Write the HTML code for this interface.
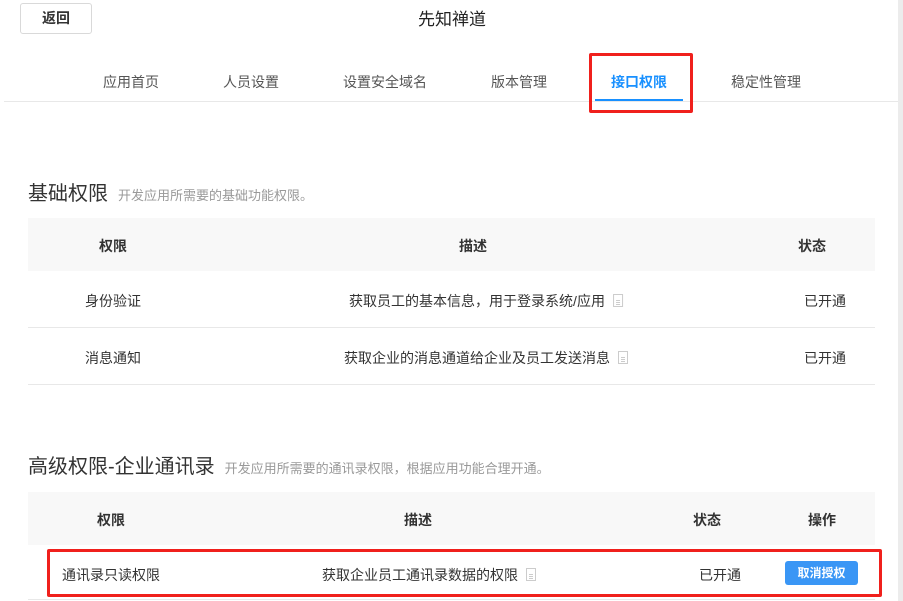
<!DOCTYPE html>
<html><head><meta charset="utf-8"><style>
*{margin:0;padding:0;box-sizing:border-box}
body{width:903px;height:601px;overflow:hidden;background:#fff;font-family:"Liberation Sans","Noto Sans CJK SC",sans-serif;color:#333;position:relative}
.a{position:absolute;white-space:nowrap}
.c{transform:translateX(-50%)}
.t14{font-size:14px}
.sub{font-size:13px;color:#999;margin-left:4px}
.doc{display:inline-block;width:10px;height:13px;border:1px solid #ccc;vertical-align:-1px;margin-left:8px;position:relative;background:#fff}
.doc:before{content:"";position:absolute;left:2px;right:2px;top:5px;height:1px;background:#ccc;box-shadow:0 2px 0 #ccc,0 4px 0 #ccc}
</style></head><body>
<div class="a" style="left:898px;top:0;width:5px;height:601px;background:#ececec"></div>
<div class="a" style="left:20px;top:3px;width:72px;height:31px;border:1px solid #d9d9d9;border-radius:3px;font-size:14px;font-weight:bold;text-align:center;line-height:29px">返回</div>
<div class="a c" style="left:452px;top:5px;font-size:17px;color:#222">先知禅道</div>
<div class="a c t14" style="left:131px;top:72px;color:#555">应用首页</div>
<div class="a c t14" style="left:251px;top:72px;color:#555">人员设置</div>
<div class="a c t14" style="left:385px;top:72px;color:#555">设置安全域名</div>
<div class="a c t14" style="left:519px;top:72px;color:#555">版本管理</div>
<div class="a c t14" style="left:639px;top:72px;color:#1890ff;font-weight:bold">接口权限</div>
<div class="a c t14" style="left:766px;top:72px;color:#555">稳定性管理</div>
<div class="a" style="left:4px;top:101px;width:894px;height:1px;background:#e8e8e8"></div>
<div class="a" style="left:595px;top:99px;width:88px;height:2px;background:#1890ff"></div>
<div class="a" style="left:589px;top:53px;width:104px;height:60px;border:3px solid #f0201c;border-radius:2px"></div>

<div class="a" style="left:28px;top:177px;font-size:20px;color:#333">基础权限<span class="sub" style="margin-left:10px">开发应用所需要的基础功能权限。</span></div>
<div class="a" style="left:28px;top:218px;width:847px;height:53px;background:#f8f8f8"></div>
<div class="a c t14" style="left:113px;top:236px;font-weight:bold">权限</div>
<div class="a c t14" style="left:473px;top:236px;font-weight:bold">描述</div>
<div class="a c t14" style="left:812px;top:236px;font-weight:bold">状态</div>
<div class="a c t14" style="left:113px;top:291px">身份验证</div>
<div class="a c t14" style="left:486px;top:291px">获取员工的基本信息，用于登录系统/应用<span class="doc"></span></div>
<div class="a c t14" style="left:825px;top:291px">已开通</div>
<div class="a" style="left:28px;top:327px;width:847px;height:1px;background:#e8e8e8"></div>
<div class="a c t14" style="left:113px;top:348px">消息通知</div>
<div class="a c t14" style="left:486px;top:348px">获取企业的消息通道给企业及员工发送消息<span class="doc"></span></div>
<div class="a c t14" style="left:825px;top:348px">已开通</div>
<div class="a" style="left:28px;top:384px;width:847px;height:1px;background:#e8e8e8"></div>

<div class="a" style="left:28px;top:450px;font-size:20px;color:#333">高级权限-企业通讯录<span class="sub" style="margin-left:10px">开发应用所需要的通讯录权限，根据应用功能合理开通。</span></div>
<div class="a" style="left:28px;top:492px;width:847px;height:53px;background:#f8f8f8"></div>
<div class="a c t14" style="left:111px;top:510px;font-weight:bold">权限</div>
<div class="a c t14" style="left:418px;top:510px;font-weight:bold">描述</div>
<div class="a c t14" style="left:707px;top:510px;font-weight:bold">状态</div>
<div class="a c t14" style="left:822px;top:510px;font-weight:bold">操作</div>
<div class="a t14" style="left:62px;top:565px">通讯录只读权限</div>
<div class="a c t14" style="left:429px;top:565px">获取企业员工通讯录数据的权限<span class="doc"></span></div>
<div class="a c t14" style="left:720px;top:565px">已开通</div>
<div class="a" style="left:785px;top:561px;width:73px;height:24px;background:#3a96f5;border-radius:3px;color:#fff;font-size:12px;font-weight:bold;text-align:center;line-height:24px">取消授权</div>
<div class="a" style="left:28px;top:599px;width:847px;height:1px;background:#e8e8e8"></div>
<div class="a" style="left:47px;top:549px;width:835px;height:48px;border:3px solid #f0201c;border-radius:2px"></div>
</body></html>
